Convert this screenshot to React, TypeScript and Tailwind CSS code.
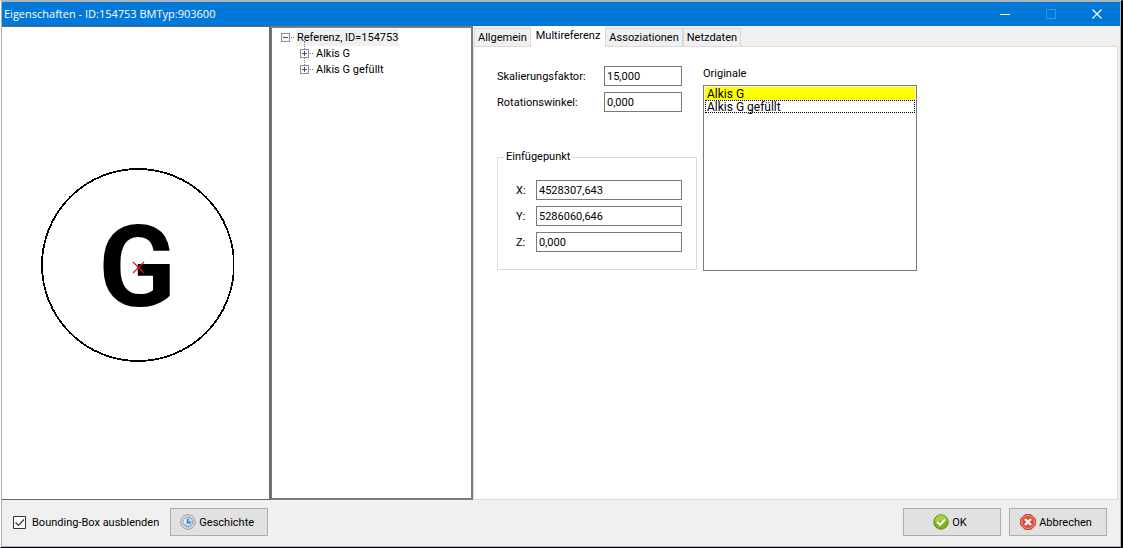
import { useState } from "react";

const tabs = ["Allgemein", "Multireferenz", "Assoziationen", "Netzdaten"];

const treeNodes = ["Alkis G", "Alkis G gefüllt"];

const insertionPoint = [
  { axis: "X", value: "4528307,643" },
  { axis: "Y", value: "5286060,646" },
  { axis: "Z", value: "0,000" },
];

function TitleBar() {
  return (
    <header className="flex h-6 shrink-0 items-center justify-between bg-[#0078d7] pl-0.5 text-white">
      <h1 className="font-['Open_Sans',sans-serif] leading-4">
        Eigenschaften - ID:154753 BMTyp:903600
      </h1>
      <div className="flex">
        <button aria-label="Minimieren" className="flex h-6 w-[46px] items-center justify-center">
          <svg width="10" height="10" shapeRendering="crispEdges">
            <path d="M0 5.5h10" stroke="white" />
          </svg>
        </button>
        <button aria-label="Maximieren" disabled className="flex h-6 w-[46px] items-center justify-center">
          <svg width="10" height="10" fill="none" shapeRendering="crispEdges">
            <path d="M.5.5h9v9h-9z" stroke="#3395e0" />
          </svg>
        </button>
        <button aria-label="Schließen" className="flex h-6 w-[46px] items-center justify-center">
          <svg width="10" height="10">
            <path d="M.5.5l9 9M9.5.5l-9 9" stroke="white" strokeWidth="1.2" />
          </svg>
        </button>
      </div>
    </header>
  );
}

function Preview() {
  return (
    <section className="flex w-[269px] shrink-0 items-center justify-center border-r-2 border-t border-b border-[#696969] bg-white">
      <svg width="196" height="198" viewBox="0 0 196 198" role="img" aria-label="Vorschau">
        <circle cx="100" cy="101" r="96" fill="none" stroke="black" strokeWidth="1.8" shapeRendering="crispEdges" />
        <text
          x="99"
          y="142"
          textAnchor="middle"
          className="font-['Roboto',sans-serif] text-[114px] font-bold"
        >
          G
        </text>
        <path d="M95 98l11 11M106 98l-11 11" stroke="#d81818" strokeWidth="1.2" />
      </svg>
    </section>
  );
}

function Expander({ open = false }: { open?: boolean }) {
  return (
    <svg width="13" height="9" className="mr-0.5 shrink-0" fill="none" shapeRendering="crispEdges">
      <rect x=".5" y=".5" width="8" height="8" fill="#fafafa" stroke="#919191" />
      <path d={open ? "M2 4.5h5" : "M2 4.5h5M4.5 2v5"} stroke="#404f8a" />
      <path d="M10 4.5h3" stroke="#808080" strokeDasharray="1 1" />
    </svg>
  );
}

function ReferenceTree() {
  return (
    <section className="w-[202px] shrink-0 border-2 border-l-1 border-[#7c7c80] bg-white pt-px pl-[9px]">
      <ul role="tree">
        <li role="treeitem" aria-expanded="true">
          <div className="flex h-4 items-center">
            <Expander open />
            <span className="bg-[#f0f0f0] px-px">Referenz, ID=154753</span>
          </div>
          <ul role="group" className="pl-[19px]">
            {treeNodes.map((node) => (
              <li key={node} role="treeitem" aria-expanded="false" className="relative flex h-4 items-center">
                <span className="absolute -top-1 left-1 h-2 border-l border-dotted border-[#808080]" />
                <span className="relative flex items-center">
                  <Expander />
                  <span className="px-px">{node}</span>
                </span>
              </li>
            ))}
          </ul>
        </li>
      </ul>
    </section>
  );
}

function Field({ id, label, value, width }: { id: string; label: string; value: string; width: string }) {
  return (
    <div className="flex h-5 items-center justify-between">
      <label htmlFor={id}>{label}:</label>
      <input id={id} defaultValue={value} className={`h-5 border border-[#7a7a7a] bg-white px-0.5 ${width}`} />
    </div>
  );
}

function MultiReference() {
  return (
    <div className="flex items-start gap-1.5 pt-[19px] pl-[23px]">
      <div className="w-[200px]">
        <div className="mr-[15px] flex flex-col gap-1.5">
          <Field id="scale" label="Skalierungsfaktor" value="15,000" width="w-[78px]" />
          <Field id="rotation" label="Rotationswinkel" value="0,000" width="w-[78px]" />
        </div>
        <fieldset className="mt-[37px] h-[121px] border border-[#dcdcdc] pt-[15px] pr-3.5 pl-[18px]">
          <legend className="-ml-3 px-0.5 leading-4">Einfügepunkt</legend>
          <div className="flex flex-col gap-1.5">
            {insertionPoint.map(({ axis, value }) => (
              <Field key={axis} id={`point-${axis}`} label={axis} value={value} width="w-[146px]" />
            ))}
          </div>
        </fieldset>
      </div>
      <div className="w-[214px]">
        <h2 id="originals" className="leading-4">Originale</h2>
        <ul
          role="listbox"
          aria-labelledby="originals"
          className="mt-[3px] h-[186px] border border-[#7a7a7a] p-px text-[12px]"
        >
          <li role="option" aria-selected="false" className="h-[13px] bg-[#ffff00] px-0.5 leading-[15px]">
            Alkis G
          </li>
          <li
            role="option"
            aria-selected="true"
            className="h-[13px] border border-dotted border-black px-px leading-[13px]"
          >
            Alkis G gefüllt
          </li>
        </ul>
      </div>
    </div>
  );
}

function ClockIcon() {
  return (
    <svg width="16" height="16" viewBox="0 0 16 16">
      <circle cx="8" cy="8" r="7.3" fill="#dfe1e3" stroke="#96999d" />
      <circle cx="8" cy="8" r="5" fill="#b5d5ee" stroke="#8296a8" />
      <path d="M8 8V3.5A4.5 4.5 0 0 0 4 10z" fill="#dceefa" />
      <path d="M7.5 4.5v4h3.5" fill="none" stroke="#3a74aa" strokeWidth="1.4" />
    </svg>
  );
}

function OkIcon() {
  return (
    <svg width="16" height="16" viewBox="0 0 16 16">
      <circle cx="8" cy="8" r="7.2" fill="#7fb51c" stroke="#5b8c12" />
      <path d="M2 7a6 6 0 0 1 12 0z" fill="#a5d23f" />
      <path d="M4 7.7l3 3 5-5" fill="none" stroke="white" strokeWidth="2.2" />
    </svg>
  );
}

function CancelIcon() {
  return (
    <svg width="16" height="16" viewBox="0 0 16 16">
      <path d="M5 .7h6L15.3 5v6L11 15.3H5L.7 11V5z" fill="#e0483a" stroke="#bd3327" />
      <path d="M5.4 1.8h5.2l3.6 3.6v5.2l-3.6 3.6H5.4l-3.6-3.6V5.4z" fill="none" stroke="#f29a8f" />
      <path d="M5 5l6 6M11 5l-6 6" stroke="white" strokeWidth="2.4" />
    </svg>
  );
}

const buttonClass =
  "flex h-7 w-[98px] items-center justify-center gap-[3px] border border-[#adadad] bg-[#e1e1e1] pr-1";

export default function App() {
  const [activeTab, setActiveTab] = useState("Multireferenz");
  const [hideBox, setHideBox] = useState(true);

  return (
    <div className="flex h-screen flex-col border-t border-r-2 border-b border-l border-t-[#b4b4b4] border-r-black border-b-black border-l-white bg-[#f0f0f0] font-['Roboto',sans-serif] text-[11px] leading-[17px] text-black">
      <div className="flex min-h-0 grow flex-col border border-[#a8b4bc]">
        <TitleBar />
        <main className="flex min-h-0 grow">
          <Preview />
          <ReferenceTree />
          <section className="flex min-w-0 grow flex-col pr-0.5">
            <div role="tablist" className="flex h-5 shrink-0 items-end pl-px">
              {tabs.map((tab) => (
                <button
                  key={tab}
                  role="tab"
                  aria-selected={tab === activeTab}
                  onClick={() => setActiveTab(tab)}
                  className={
                    tab === activeTab
                      ? "relative z-10 -mb-px h-[21px] bg-white px-[5px] pb-0.5"
                      : "h-[18px] border border-b-0 border-[#d9d9d9] px-[3px]"
                  }
                >
                  {tab}
                </button>
              ))}
            </div>
            <div role="tabpanel" className="grow border border-[#dcdcdc] bg-white">
              {activeTab === "Multireferenz" && <MultiReference />}
            </div>
          </section>
        </main>
        <footer className="flex h-[46px] shrink-0 items-center gap-[11px] pr-[13px] pb-0.5 pl-[11px]">
          <label className="flex items-center gap-1.5">
            <input
              type="checkbox"
              checked={hideBox}
              onChange={(e) => setHideBox(e.target.checked)}
              className="sr-only"
            />
            <svg width="13" height="13" className="shrink-0" fill="none">
              <path d="M.5.5h12v12H.5z" fill="white" stroke="#333333" />
              {hideBox && <path d="M2.5 6.5l3 3 5.5-6" stroke="#333333" strokeWidth="1.2" />}
            </svg>
            Bounding-Box ausblenden
          </label>
          <button className={buttonClass}>
            <ClockIcon />
            Geschichte
          </button>
          <div className="ml-auto flex gap-2">
            <button className={buttonClass}>
              <OkIcon />
              OK
            </button>
            <button className={buttonClass}>
              <CancelIcon />
              Abbrechen
            </button>
          </div>
        </footer>
      </div>
    </div>
  );
}
